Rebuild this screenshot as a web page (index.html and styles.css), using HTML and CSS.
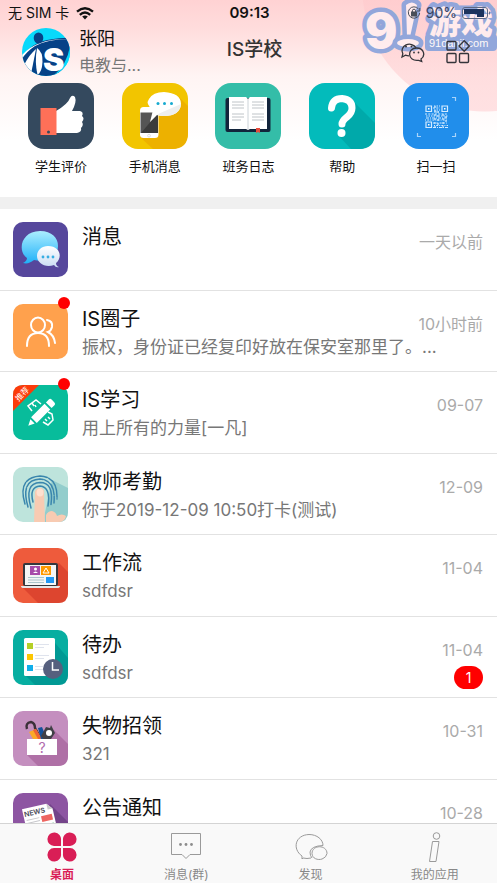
FILE: index.html
```html
<!DOCTYPE html>
<html lang="zh-CN">
<head>
    <meta charset="UTF-8">
    <meta name="viewport" content="width=device-width, initial-scale=1.0">
    <title>IS学校</title>
    <link rel="stylesheet" href="styles.css">
</head>
<body>

<div class="app">
    <header class="header">
        <div class="status">
            <div class="status-left">
                <span>无 SIM 卡</span>
                <svg width="18" height="13" viewBox="0 0 18 13" fill="none" stroke="#111" stroke-width="2.4">
                    <path d="M1 4.6Q9-2 17 4.6"/>
                    <path d="M3.8 7.8Q9 3.4 14.2 7.8"/>
                    <path d="M6.2 9.6Q9 7.4 11.8 9.6L9 12.6z" fill="#111" stroke="none"/>
                </svg>
            </div>
            <strong class="clock">09:13</strong>
            <div class="status-right">
                <svg width="14" height="14" viewBox="0 0 14 14" fill="none" stroke="#4b4f58">
                    <path d="M11.5 3A5.7 5.7 0 1 0 12.7 7M12.8 2v3h-3"/>
                    <rect x="4.5" y="6" width="5" height="4" fill="#4b4f58"/>
                    <path d="M5.4 6V4.8a1.6 1.6 0 0 1 3.2 0V6"/>
                </svg>
                <span>90%</span>
                <svg width="29" height="13" viewBox="0 0 29 13">
                    <rect x=".5" y=".5" width="25" height="11" rx="2.5" fill="none" stroke="#5d6883"/>
                    <path d="M2 2h20v8h-7V7H2z" fill="#1d335d"/>
                    <path d="M27 4q2 2 0 4z" fill="#5d6883"/>
                </svg>
            </div>
        </div>

        <div class="bar">
            <div class="user">
                <svg class="avatar" viewBox="0 0 48 48">
                    <defs><clipPath id="round"><circle cx="24" cy="24" r="24"/></clipPath></defs>
                    <g clip-path="url(#round)">
                        <rect width="48" height="48" fill="#08d9fb"/>
                        <path d="M-1 32Q8 15 25 12Q43 9 49 10Q49 36 33 50H-1z" fill="#064287"/>
                        <path d="M0 27Q15 10 47 11Q26 11 13 18Q4 24 0 31z" fill="#fff"/>
                        <path d="M2 37Q7 27 14 21L9 46z" fill="#fff"/>
                        <path d="M15 20q6 4 5.500 14t-5 13q-3-13-.5-27z" fill="#fff"/>
                        <path d="M48 18Q45 37 31 48l5 1L49 34z" fill="#08d9fb"/>
                        <ellipse cx="16.500" cy="10" rx="4.800" ry="5.500" fill="#064287"/>
                        <text class="avatar-text" x="21" y="43">S</text>
                    </g>
                </svg>
                <div class="user-text">
                    <span class="user-name">张阳</span>
                    <span class="user-dept">电教与...</span>
                </div>
            </div>
            <h1 class="title">IS学校</h1>
            <div class="actions">
                <button class="icon-button" aria-label="微信">
                    <svg width="26" height="24" viewBox="0 0 26 24" fill="none" stroke="#34343a" stroke-width="1.300">
                        <path d="M10 15.800q-2 0-3.500-.6L3 17l.8-3.200A7.300 6.500 0 1 1 17 7.800"/>
                        <path d="M17.500 8c8 0 9 8 4.500 11l.7 2.500-3-1.200C8 22 8 8 17.500 8z"/>
                        <g fill="#34343a" stroke="none"><circle cx="7" cy="6.500" r="1"/><circle cx="12.500" cy="6.500" r="1"/><circle cx="15" cy="12.500" r=".9"/><circle cx="19.500" cy="12.500" r=".9"/></g>
                    </svg>
                </button>
                <button class="icon-button" aria-label="更多应用">
                    <svg width="26" height="24" viewBox="0 0 26 24" fill="none" stroke="#34343a" stroke-width="1.400">
                        <rect x="2" y="1.500" width="9" height="8.500" rx="1"/>
                        <rect x="2" y="13.500" width="9" height="9" rx="1"/>
                        <rect x="14.500" y="13.500" width="9" height="9" rx="1"/>
                        <path d="M19.200 .8l5.200 5.200-5.200 5.200L14 6z"/>
                    </svg>
                </button>
            </div>
        </div>

        <nav class="shortcuts">
            <button class="shortcut">
                <svg class="tile" viewBox="0 0 66 66">
                    <rect width="66" height="66" rx="16" fill="#34495e"/>
                    <path d="M28 28Q40 21 42 15q2-4 5-1 2 5-3 14h8q4 1 2 5 3 2 0 6 2 3-1 6 1 4-4 5H28z" fill="#fff"/>
                    <rect x="12.500" y="25" width="16" height="27" fill="#ff7058"/>
                    <circle cx="20.500" cy="49" r="1.500" fill="#34495e"/>
                </svg>
                <span>学生评价</span>
            </button>
            <button class="shortcut">
                <svg class="tile" viewBox="0 0 66 66">
                    <rect width="66" height="66" rx="16" fill="#f2c500"/>
                    <path d="M18 54L36 34 57 14l9 9v27q0 16-16 16H31z" fill="#edb100"/>
                    <rect x="18" y="24" width="18.500" height="31" rx="3.500" fill="#fff"/>
                    <path d="M18.500 29.500H36V50H18.500z" fill="#555"/>
                    <path d="M36 30v20H19z" fill="#3c3c3c"/>
                    <circle cx="27" cy="52.700" r="1.400" fill="none" stroke="#ccc" stroke-width=".6"/>
                    <path d="M31 27q-8-6-4-11 4-7 15-7 17 1 17 12-1 12-17 12-4 0-7-1l-7 7z" fill="#fff"/>
                    <path d="M59 21q-1 12-17 12-4 0-7-1l-7 7 8-8z" fill="#eee"/>
                    <g fill="#16aad0"><circle cx="36" cy="20.500" r="1.500"/><circle cx="42.500" cy="20.500" r="1.500"/><circle cx="49.500" cy="20.500" r="1.500"/></g>
                </svg>
                <span>手机消息</span>
            </button>
            <button class="shortcut">
                <svg class="tile" viewBox="0 0 66 66">
                    <rect width="66" height="66" rx="16" fill="#34bda8"/>
                    <rect x="10.500" y="15" width="45" height="34" rx="2" fill="#12243b"/>
                    <path d="M14 14h17l2 2 2-2h17v32H35l-2 1-2-1H14z" fill="#fff"/>
                    <path d="M33 16v30" stroke="#ccd3d8"/>
                    <path d="M17 19h12M17 22h12M17 25h12M17 31h12M17 34h12M17 37h9M37 19h12M37 22h12M37 25h12M37 31h12M37 34h12M37 37h12" stroke="#bfc4c8" stroke-width="1"/>
                    <path d="M41 45h4v5l-2-1-2 1z" fill="#e64c3c"/>
                </svg>
                <span>班务日志</span>
            </button>
            <button class="shortcut">
                <svg class="tile" viewBox="0 0 66 66">
                    <rect width="66" height="66" rx="16" fill="#03bbbb"/>
                    <path d="M46 20L66 40v10q0 16-16 16h-8L29 52l7-16z" fill="#00a9aa"/>
                    <path d="M22.500 25q1-9.500 10.500-9.500 10 1 10 9.500 0 5-5 9-5 4-5 7" fill="none" stroke="#fff" stroke-width="7" stroke-linecap="round"/>
                    <circle cx="32.500" cy="50" r="4" fill="#fff"/>
                </svg>
                <span>帮助</span>
            </button>
            <button class="shortcut">
                <svg class="tile" viewBox="0 0 66 66" fill="none">
                    <rect width="66" height="66" rx="16" fill="#218eeb"/>
                    <path d="M14.500 18v-3.500H18M49 14.500h3.500V18M14.500 50v3.500H18M49 53.500h3.500V50" stroke="#a9d4fa" stroke-width="1.200"/>
                    <g stroke="#d5ebff" stroke-width="1.200">
                        <path d="M23 23h5.500v5.500H23zM39 23h5.500v5.500H39zM23 39h5.500v5.500H23z"/>
                        <path d="M31 23h6M31 27h6M23 33h22" stroke-dasharray="1.500 1"/>
                        <path d="M30 25h7M22 31h23M30 40h14" stroke-dasharray="2 1.300"/>
                        <path d="M31 29h6M23 35h22M30 44.500h15" stroke-dasharray="3 1 1 1"/>
                        <path d="M22 37h23M31 42.500h14" stroke-dasharray="1 1.200 2 1"/>
                        <path d="M32 23v22M35 28v16M40 31v14M43 33v8" stroke-dasharray="2 2"/>
                    </g>
                    <path d="M25 25h1.500v1.500H25zM41 25h1.500v1.500H41zM25 41h1.500v1.500H25z" fill="#fff"/>
                </svg>
                <span>扫一扫</span>
            </button>
        </nav>

        <svg class="watermark" width="138" height="56" viewBox="0 0 138 56">
            <rect x="66" y="34" width="72" height="17" rx="4" fill="#7f9fdc"/>
            <g class="watermark-text">
                <text class="mark-number" x="6" y="48">9</text>
                <path d="M47 5q6-5 11 0l-7 32h-3z"/>
                <ellipse cx="49" cy="43" rx="11" ry="4"/>
                <text class="mark-name" x="70" y="34">游戏</text>
            </g>
            <text class="mark-site" x="70" y="47">91danji.com</text>
        </svg>
    </header>

    <main class="list">
        <a class="row" href="#">
            <span class="row-icon">
                <svg viewBox="0 0 55 55">
                    <defs>
                        <linearGradient id="blue" x2="0" y2="1"><stop stop-color="#abedff"/><stop offset="1" stop-color="#1fb1f8"/></linearGradient>
                        <linearGradient id="pale" x2="0" y2="1"><stop stop-color="#fff"/><stop offset="1" stop-color="#c9dcf3"/></linearGradient>
                    </defs>
                    <rect width="55" height="55" rx="10" fill="#56479c"/>
                    <path d="M14 36C4 29 8 9 27 9c12 0 18 7 18 15 0 11-12 17-24 14-4 3-7 4-11 3q4-2 4-5z" fill="url(#blue)"/>
                    <path d="M41 43c-9 3-17-2-17-9 0-6 5-10 11-10 12 0 15 11 8 17q0 3 3 4-3 1-5-2z" fill="url(#pale)"/>
                    <g fill="#37aee2"><circle cx="30" cy="35" r="1.400"/><circle cx="35" cy="35" r="1.400"/><circle cx="40" cy="35" r="1.400"/></g>
                </svg>
            </span>
            <span class="row-text"><span class="row-title">消息</span></span>
            <span class="row-side"><time>一天以前</time></span>
        </a>
        <a class="row" href="#">
            <span class="row-icon has-dot">
                <svg viewBox="0 0 55 55">
                    <rect width="55" height="55" rx="10" fill="#ffa14d"/>
                    <g fill="none" stroke="#fff" stroke-width="2" stroke-linecap="round">
                        <ellipse cx="25" cy="21" rx="7" ry="7.500"/>
                        <path d="M14 42q0-13 11-13t11 13M34 16q6 1 5 7-1 4-4 5 6 3 7 11"/>
                    </g>
                </svg>
            </span>
            <span class="row-text"><span class="row-title">IS圈子</span><span class="row-note">振权，身份证已经复印好放在保安室那里了。...</span></span>
            <span class="row-side"><time>10小时前</time></span>
        </a>
        <a class="row" href="#">
            <span class="row-icon has-dot">
                <svg viewBox="0 0 55 55">
                    <rect width="55" height="55" rx="10" fill="#08bc9b"/>
                    <path d="M10 0h16L0 26V10Q0 0 10 0z" fill="#fc3b0a"/>
                    <text class="ribbon" y="3" transform="translate(9 9) rotate(-45)">推荐</text>
                    <g transform="rotate(-45 28 28)">
                        <path d="M12 25l-6 3 6 3zM14 24h19v8H14zM35 24h4q2 0 2 2v4q0 2-2 2h-4z" fill="#fff" transform="translate(4 0)"/>
                    </g>
                    <g fill="none" stroke="#fff" stroke-width="1.500">
                        <path d="M19 26l-4-5 8-6 5 4M30 37l5 3 5-5-1-6-4-2M19 18l2 3M22 20l1 2M35 32l2 2M32 34l2 2"/>
                    </g>
                </svg>
            </span>
            <span class="row-text"><span class="row-title">IS学习</span><span class="row-note">用上所有的力量[一凡]</span></span>
            <span class="row-side"><time>09-07</time></span>
        </a>
        <a class="row" href="#">
            <span class="row-icon">
                <svg viewBox="0 0 55 55">
                    <rect width="55" height="55" rx="10" fill="#bee4dc"/>
                    <path d="M39 13l16 8v24q0 10-10 10H30z" fill="#93cdcc"/>
                    <g fill="none" stroke="#3a86ad" stroke-width="1.500" stroke-linecap="round">
                        <path d="M12 37Q4 11 27 9q18 1 17 23" stroke-dasharray="22 1.500"/>
                        <path d="M15 40Q7 13 27 12q16 1 14 24" stroke-dasharray="19 1.500"/>
                        <path d="M18 41Q11 16 27 15.500q14 0 11 22"/>
                        <path d="M20 35Q16 20 27 19q11 1 8 20"/>
                    </g>
                    <path d="M21 55l1-30q1-4 5-4t4 4l1 30z" fill="#f8cbb2"/>
                    <ellipse cx="27" cy="25.500" rx="3.500" ry="4" fill="#fee0cf"/>
                    <path d="M33 55v-7q2-4 6-4 4 1 5 5 5-3 9 0-1 6-8 6z" fill="#f8cbb2"/>
                </svg>
            </span>
            <span class="row-text"><span class="row-title">教师考勤</span><span class="row-note">你于2019-12-09 10:50打卡(测试)</span></span>
            <span class="row-side"><time>12-09</time></span>
        </a>
        <a class="row" href="#">
            <span class="row-icon">
                <svg viewBox="0 0 55 55">
                    <rect width="55" height="55" rx="10" fill="#ee5b3c"/>
                    <path d="M9 39l37-24 9 9v21q0 10-10 10H25z" fill="#dd452f"/>
                    <rect x="10" y="15" width="35" height="23" rx="2" fill="#34363d"/>
                    <path d="M12 17h31v20H12z" fill="#f4f5f5"/>
                    <path d="M17 18h10v9H17z" fill="#a74baa"/><path d="M28 18h10v9H28z" fill="#ff9800"/>
                    <path d="M33 29h8v6h-8z" fill="#2196f3"/>
                    <path d="M15 29.500h16M15 32h16M15 34.500h16" stroke="#aac5cc"/>
                    <circle cx="22.500" cy="21" r="1.500" fill="#fff"/><path d="M20 25q2.500-3 5 0z" fill="#fff"/>
                    <path d="M33 20l3 5h-6z" fill="none" stroke="#fff"/>
                    <path d="M8 38h39q0 2-3 2H11q-3 0-3-2z" fill="#e5e7e8"/>
                </svg>
            </span>
            <span class="row-text"><span class="row-title">工作流</span><span class="row-note">sdfdsr</span></span>
            <span class="row-side"><time>11-04</time></span>
        </a>
        <a class="row" href="#">
            <span class="row-icon">
                <svg viewBox="0 0 55 55">
                    <rect width="55" height="55" rx="10" fill="#07aea1"/>
                    <path d="M12 45L42 13l13 15v17q0 10-10 10H22z" fill="#019994"/>
                    <rect x="11" y="8" width="31" height="38" rx="1.500" fill="#fff"/>
                    <path d="M14 13h6v6h-6z" fill="#b4cf27"/><path d="M14 24h6v6h-6z" fill="#fcc602"/><path d="M14 35h6v6h-6z" fill="#10aeea"/>
                    <path d="M22 14.500h14M22 17.500h9M22 25.500h14M22 28.500h9M22 36.500h8M22 39.500h8" stroke="#dfe3ed"/>
                    <circle cx="40" cy="39" r="10" fill="#56607e"/>
                    <path d="M39.500 32v8H46" fill="none" stroke="#fff" stroke-width="1.500"/>
                </svg>
            </span>
            <span class="row-text"><span class="row-title">待办</span><span class="row-note">sdfdsr</span></span>
            <span class="row-side"><time>11-04</time><span class="count">1</span></span>
        </a>
        <a class="row" href="#">
            <span class="row-icon">
                <svg viewBox="0 0 55 55">
                    <rect width="55" height="55" rx="10" fill="#c48fbf"/>
                    <path d="M14 44l27-25 14 14v12q0 10-10 10H25z" fill="#af70a6"/>
                    <path d="M14 18q-2-6 4-7 4 1 4 6l5 9" fill="none" stroke="#3b3039" stroke-width="2.500"/>
                    <path d="M16 21l7-3 6 10h-9z" fill="#fba928"/><path d="M20 19l3-1 6 10h-4z" fill="#ee6334"/>
                    <path d="M25 17l4-1 5 12h-6z" fill="#14529b"/>
                    <path d="M28 25l5-9 4 1 1-3 4 8-4 6h-8z" fill="#404046"/>
                    <circle cx="36" cy="22" r="3" fill="#fff"/>
                    <path d="M14 28h30v16H14z" fill="#fff"/>
                    <text class="box-mark" x="29" y="42">?</text>
                </svg>
            </span>
            <span class="row-text"><span class="row-title">失物招领</span><span class="row-note">321</span></span>
            <span class="row-side"><time>10-31</time></span>
        </a>
        <a class="row" href="#">
            <span class="row-icon">
                <svg viewBox="0 0 55 55">
                    <rect width="55" height="55" rx="10" fill="#8d55a2"/>
                    <path d="M37 11l18 18v26H20z" fill="#734389"/>
                    <g transform="rotate(-13 25 28)">
                        <path d="M12 13h25l5 6v36H12z" fill="#fff"/>
                        <path d="M37 13v6h5z" fill="#ccc"/>
                        <text class="news" x="13" y="21">NEWS</text>
                        <path d="M14 25h13M14 28h13M14 31h13M14 35h13" stroke="#c8c8cc"/>
                        <path d="M29 24h11v6H29z" fill="#ed6560"/><path d="M29 33h11v6H29z" fill="#5dbf7f"/>
                    </g>
                </svg>
            </span>
            <span class="row-text"><span class="row-title">公告通知</span></span>
            <span class="row-side"><time>10-28</time></span>
        </a>
    </main>

    <nav class="tabs">
        <a class="tab active" href="#">
            <svg width="30" height="30" viewBox="0 0 30 30" fill="#d91e56">
                <path d="M14 14V8a6.800 6.800 0 1 0-7 6zM16 14V8a6.800 6.800 0 1 1 7 6zM14 16v6a6.800 6.800 0 1 1-7-6zM16 16v6a6.800 6.800 0 1 0 7-6z"/>
            </svg>
            <span>桌面</span>
        </a>
        <a class="tab" href="#">
            <svg width="30" height="30" viewBox="0 0 30 30" fill="none" stroke="#9a9a9a">
                <path d="M.5 1.500h29v21H19l-4 4-4-4H.5z"/>
                <g fill="#8c8c8c" stroke="none"><circle cx="9.500" cy="12.500" r="1.400"/><circle cx="15" cy="12.500" r="1.400"/><circle cx="20.500" cy="12.500" r="1.400"/></g>
            </svg>
            <span>消息(群)</span>
        </a>
        <a class="tab" href="#">
            <svg width="34" height="30" viewBox="0 0 34 30" fill="none" stroke="#9a9a9a">
                <path d="M17 26q-4 1-8 0l-1 1v-3C-2 17 1 3 15 2.500c8 0 14 5 14 11Q17 14 16 20q0 4 2 6"/>
                <path d="M29 26.500q3-1 4-5c0-9-15-9-15 0 0 5 6 7 10 5.500z"/>
            </svg>
            <span>发现</span>
        </a>
        <a class="tab" href="#">
            <svg width="30" height="30" viewBox="0 0 30 30" fill="none" stroke="#9a9a9a">
                <circle cx="16.500" cy="4" r="3.300"/>
                <path d="M12.500 9.500h6.500l-3 20H9.500z"/>
            </svg>
            <span>我的应用</span>
        </a>
    </nav>
</div>

</body>
</html>
```

FILE: styles.css
```css
* { box-sizing: border-box; }
body { margin: 0; background: #fff; color: #111; font-family: Inter, "Noto Sans CJK SC", sans-serif; }
a { color: inherit; text-decoration: none; }
button { padding: 0; border: none; background: none; color: inherit; font-family: inherit; cursor: pointer; }
svg { display: block; flex: none; }

.app { display: flex; flex-direction: column; height: 100vh; overflow: hidden; }

/* header */
.header {
    position: relative;
    flex: none;
    padding-bottom: 21px;
    border-bottom: 12px solid #f0f0f0;
    background:
        radial-gradient(circle at calc(100% - 12px) -11px, rgba(255, 200, 203, 0.5) 122px, transparent 123px),
        linear-gradient(#ffd2d3, #ffdddd 30px, #fff4f3 75px, #fff 140px);
}
.status { display: grid; grid-template-columns: 1fr auto 1fr; align-items: center; height: 26px; padding: 0 6px 0 8px; font-size: 14px; line-height: 20px; }
.status-left, .status-right { display: flex; align-items: center; gap: 7px; }
.status-right { position: relative; z-index: 1; justify-content: flex-end; color: #3c4663; gap: 5px; }
.clock { font-size: 15px; font-weight: 600; }

.bar { display: grid; grid-template-columns: 1fr auto 1fr; align-items: center; height: 48px; padding: 0 10px 0 22px; }
.user { display: flex; align-items: center; gap: 9px; }
.avatar { width: 48px; height: 48px; }
.avatar-text { font: 900 32px Inter, sans-serif; fill: #fff; }
.user-text { display: flex; flex-direction: column; line-height: 26px; }
.user-name { font-size: 18px; }
.user-dept { font-size: 16px; color: #777; }
.title { margin: 0; padding-bottom: 4px; font-size: 19px; font-weight: 500; line-height: 24px; color: #333; }
.actions { position: relative; z-index: 1; display: flex; justify-content: flex-end; gap: 20px; padding-right: 16px; }

.shortcuts { display: grid; grid-template-columns: repeat(5, 1fr); padding: 9px 14px 0; }
.shortcut { display: flex; flex-direction: column; align-items: center; gap: 7px; font-size: 13px; line-height: 20px; }
.tile { width: 66px; height: 66px; }

.watermark { position: absolute; top: 0; right: 0; overflow: visible; pointer-events: none; opacity: 0.85; }
.watermark-text { fill: #fff0f2; stroke: #7f9fdc; stroke-width: 9px; stroke-linejoin: round; paint-order: stroke; }
.mark-number { font: 900 48px Inter, sans-serif; }
.mark-name { font: 900 32px "Noto Sans CJK SC", sans-serif; }
.mark-site { font: 11px "Liberation Sans", sans-serif; fill: #fff; }

/* message list */
.list { flex: 1; min-height: 0; overflow: hidden; }
.row { display: flex; height: 82px; padding: 13px 14px 0 13px; border-bottom: 1px solid #e2e2e2; }
.row:nth-child(even) { height: 81px; }
.row-icon { position: relative; flex: none; width: 55px; height: 55px; }
.has-dot::after { content: ""; position: absolute; top: -7px; right: -2px; width: 12px; height: 12px; border-radius: 50%; background: #f00; }
.row-text { display: flex; flex-direction: column; flex: 1; min-width: 0; padding-left: 14px; white-space: nowrap; }
.row-title { font-size: 20px; line-height: 30px; }
.row-note { font-size: 17px; line-height: 26px; color: #777; }
.row-side { display: flex; flex-direction: column; align-items: flex-end; gap: 5px; width: 0; padding-top: 9px; font-size: 16px; line-height: 22px; color: #aaa; white-space: nowrap; }
.count { min-width: 29px; border-radius: 12px; background: #f00; color: #fff; font-size: 14px; line-height: 23px; text-align: center; }

.ribbon { font: 8px "Noto Sans CJK SC", sans-serif; fill: #fff; text-anchor: middle; }
.box-mark { font: 14px Inter, sans-serif; fill: #b16bad; text-anchor: middle; }
.news { font: 600 7px Inter, sans-serif; fill: #494956; }

/* bottom tabs */
.tabs { display: grid; grid-template-columns: repeat(4, 1fr); flex: none; height: 60px; padding-top: 8px; border-top: 1px solid #d4d4d4; background: #f9f9f9; }
.tab { display: flex; flex-direction: column; align-items: center; gap: 4px; font-size: 12px; line-height: 18px; color: #888; }
.tab.active { color: #d91e56; font-weight: 700; }
```
